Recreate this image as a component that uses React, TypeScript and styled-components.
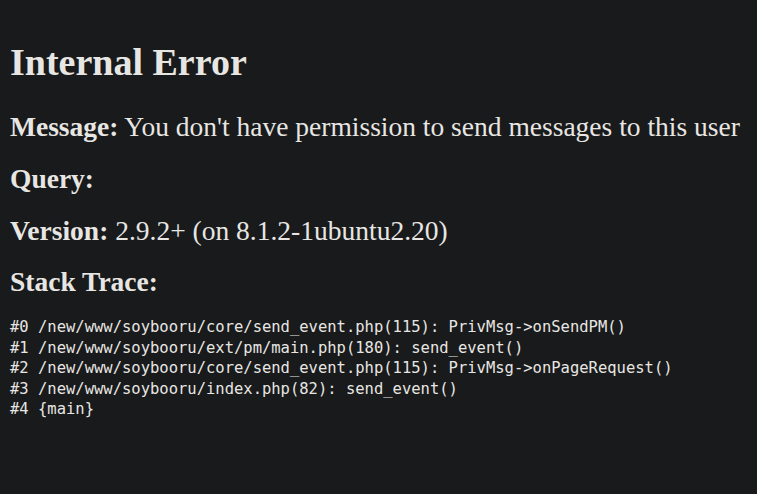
import React from "react";
import styled, { createGlobalStyle } from "styled-components";

const Global = createGlobalStyle`
  html, body { background: #181a1b; }
  body {
    margin: 8px;
    color: #e8e6e3;
    font-family: "Liberation Serif", "Times New Roman", serif;
    font-size: 16px;
  }
`;

const Page = styled.main`
  display: flex;
  flex-direction: column;
  padding: 0 2px;
`;

const Title = styled.h1`
  font-size: 38px;
  font-weight: bold;
  margin: 33px 0 29px;
  line-height: 42px;
`;

const FieldList = styled.section`
  display: flex;
  flex-direction: column;
  gap: 21.8px;
  margin-bottom: 20px;
`;

const Field = styled.h3`
  font-size: 27.5px;
  font-weight: normal;
  margin: 0;
  line-height: 30px;
  white-space: nowrap;
`;

const Label = styled.b`
  font-weight: bold;
`;

const Trace = styled.pre`
  margin: 0;
  font-family: "DejaVu Sans Mono", monospace;
  font-size: 15.5px;
  line-height: 20.5px;
`;

const lines = [
  "#0 /new/www/soybooru/core/send_event.php(115): PrivMsg->onSendPM()",
  "#1 /new/www/soybooru/ext/pm/main.php(180): send_event()",
  "#2 /new/www/soybooru/core/send_event.php(115): PrivMsg->onPageRequest()",
  "#3 /new/www/soybooru/index.php(82): send_event()",
  "#4 {main}",
];

export default function App() {
  return (
    <>
      <Global />
      <Page>
        <Title>Internal Error</Title>
        <FieldList>
          <Field>
            <Label>Message:</Label> You don't have permission to send messages to this user
          </Field>
          <Field>
            <Label>Query:</Label>
          </Field>
          <Field>
            <Label>Version:</Label> 2.9.2+ (on 8.1.2-1ubuntu2.20)
          </Field>
          <Field>
            <Label>Stack Trace:</Label>
          </Field>
        </FieldList>
        <Trace>{lines.join("\n")}</Trace>
      </Page>
    </>
  );
}
